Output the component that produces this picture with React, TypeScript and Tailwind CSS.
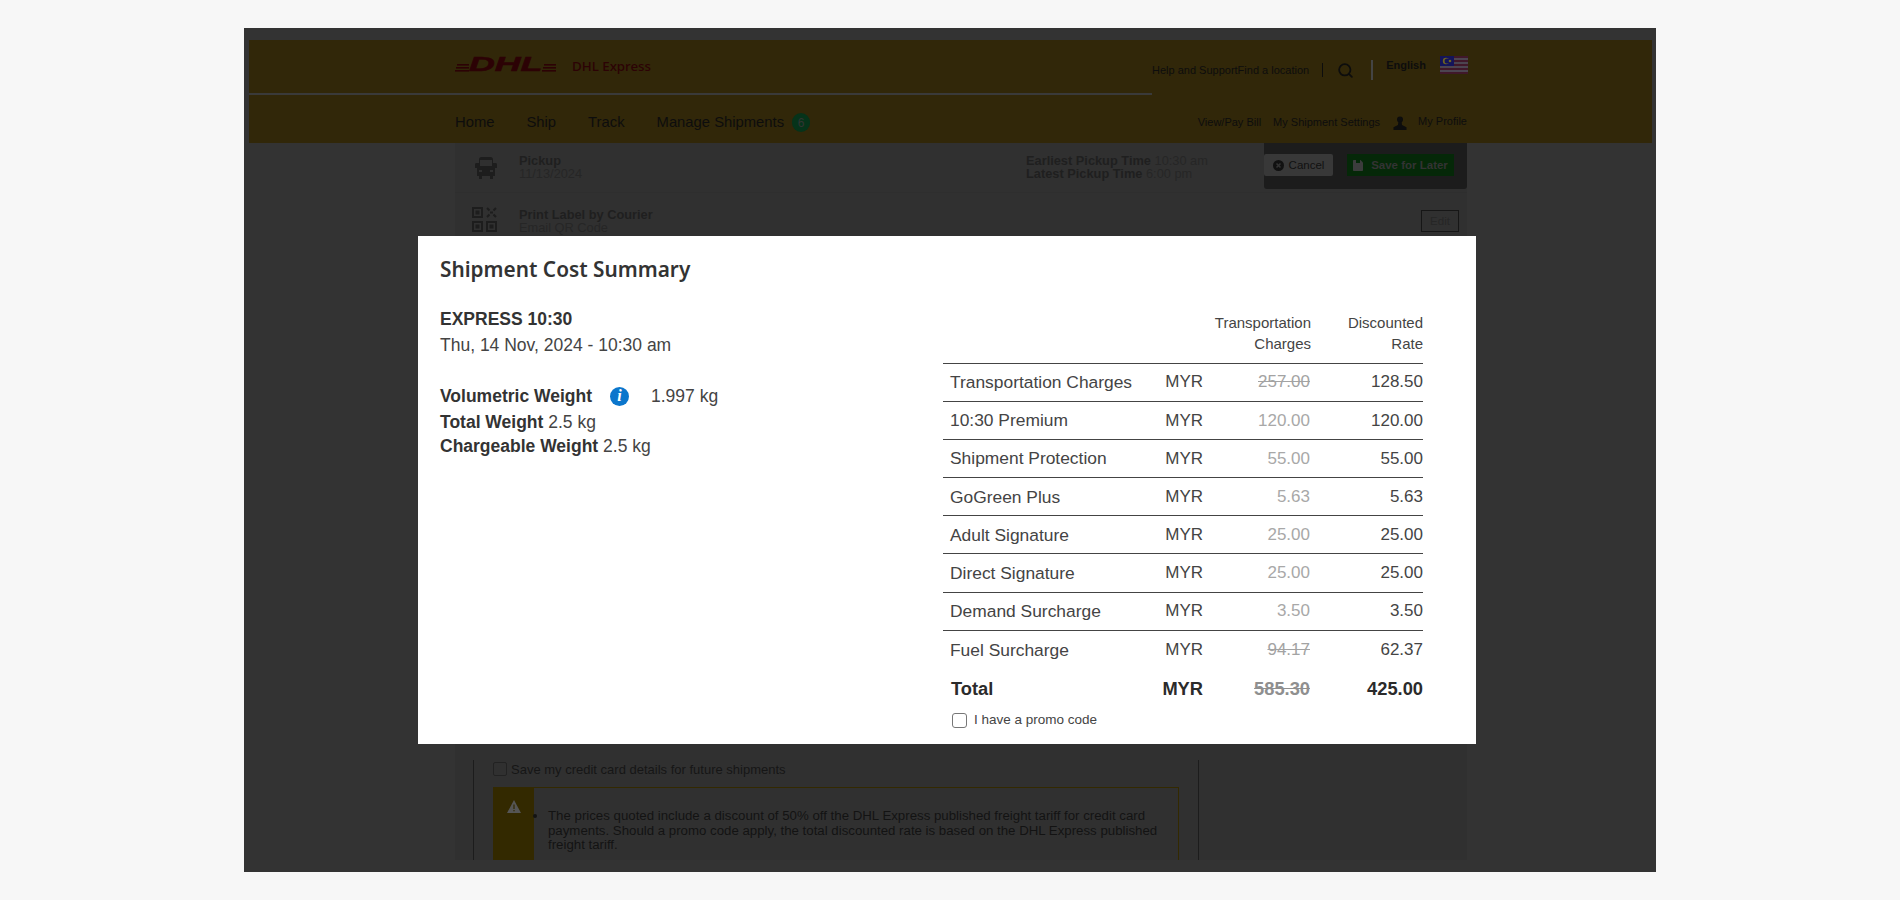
import { Search } from "lucide-react";

const rows = [
  { label: "Transportation Charges", was: "257.00", rate: "128.50", struck: true },
  { label: "10:30 Premium", was: "120.00", rate: "120.00" },
  { label: "Shipment Protection", was: "55.00", rate: "55.00" },
  { label: "GoGreen Plus", was: "5.63", rate: "5.63" },
  { label: "Adult Signature", was: "25.00", rate: "25.00" },
  { label: "Direct Signature", was: "25.00", rate: "25.00" },
  { label: "Demand Surcharge", was: "3.50", rate: "3.50" },
  { label: "Fuel Surcharge", was: "94.17", rate: "62.37", struck: true, last: true },
];

const Stripes = ({ width }: { width: number }) => (
  <svg width={width} height="8" viewBox={`0 0 ${width} 8`} className="shrink-0">
    <rect x="2" y="0" width={width - 2} height="1.6" fill="#2c0205" />
    <rect x="1" y="3" width={width - 1} height="1.6" fill="#2c0205" />
    <rect x="0" y="6" width={width} height="1.6" fill="#2c0205" />
  </svg>
);

const Flag = () => (
  <svg width="28" height="18" viewBox="0 0 28 18" className="shrink-0">
    {Array.from({ length: 9 }).map((_, i) => (
      <rect key={i} x="0" y={i * 2} width="28" height="2" fill={i % 2 === 0 ? "#40182a" : "#4c4450"} />
    ))}
    <rect x="0" y="0" width="14" height="10" fill="#14145a" />
    <circle cx="6" cy="5" r="3.2" fill="#6f6420" />
    <circle cx="7.2" cy="5" r="2.6" fill="#14145a" />
    <circle cx="10" cy="5" r="1.3" fill="#6f6420" />
  </svg>
);

const UserIcon = () => (
  <svg width="14" height="14" viewBox="0 0 14 14" className="shrink-0">
    <circle cx="7" cy="3.4" r="3" fill="#0d0d0d" />
    <path d="M5.4 5.5h3.2l.4 3.6 4.5 2.2V14H.5v-2.7L5 9.1z" fill="#0d0d0d" />
  </svg>
);

const TruckIcon = () => (
  <svg width="24" height="22" viewBox="0 0 24 22" className="shrink-0">
    <path d="M5 2.5C5 1 6 0 7.5 0h9C18 0 19 1 19 2.5V6h2.5c1 0 1.5.6 1.5 1.5V11h-2v8h-2v3h-3v-3H8v3H5v-3H3v-8H1V7.5C1 6.6 1.5 6 2.500 6H5z" fill="#1d1d1d" />
    <rect x="6" y="3" width="12" height="6" fill="#303030" />
    <rect x="5" y="13" width="3" height="2" fill="#303030" />
    <rect x="16" y="13" width="3" height="2" fill="#303030" />
  </svg>
);

const QrIcon = () => (
  <svg width="25" height="25" viewBox="0 0 25 25" className="mb-[3px] shrink-0" fill="none" stroke="#1d1d1d" strokeWidth="2">
    <rect x="1" y="1" width="9" height="9" />
    <rect x="4.500" y="4.500" width="2" height="2" fill="#1d1d1d" />
    <rect x="1" y="15" width="9" height="9" />
    <rect x="4.500" y="18.500" width="2" height="2" fill="#1d1d1d" />
    <rect x="15" y="15" width="9" height="9" />
    <rect x="18.500" y="18.500" width="2" height="2" fill="#1d1d1d" />
    <path d="M15 1l2.500 2.500M24 1l-2.500 2.500M15 10l2.500-2.500M24 10l-2.500-2.500M18 5.500h3" />
  </svg>
);

const CancelIcon = () => (
  <svg width="11" height="11" viewBox="0 0 11 11" className="shrink-0">
    <circle cx="5.500" cy="5.500" r="5.500" fill="#111" />
    <path d="M3.500 3.500l4 4M7.500 3.500l-4 4" stroke="#333" strokeWidth="1.600" />
  </svg>
);

const SaveIcon = () => (
  <svg width="10" height="11" viewBox="0 0 10 11" className="shrink-0">
    <path d="M0 1c0-.6.4-1 1-1h6.500L10 2.500V10c0 .6-.4 1-1 1H1c-.6 0-1-.4-1-1z" fill="#3c3c3c" />
    <rect x="3" y="0" width="4" height="3" fill="#052808" />
  </svg>
);

const WarnIcon = () => (
  <svg width="14" height="13" viewBox="0 0 14 13">
    <path d="M7 0l7 13H0z" fill="#555" />
    <rect x="6.400" y="4.500" width="1.200" height="4.500" fill="#332900" />
    <rect x="6.400" y="10" width="1.200" height="1.300" fill="#332900" />
  </svg>
);

export default function App() {
  return (
    <div className="h-[900px] overflow-hidden bg-[#f7f7f7] pt-[28px] pl-[244px] font-['Liberation_Sans',Arial,sans-serif]">
      <div className="relative flex h-[844px] w-[1412px] flex-col bg-[#333] pt-[12px] pr-[4px] pb-[12px] pl-[5px]">
        {/* header */}
        <header className="h-[103px] shrink-0 bg-[#312709] text-[#0d0d0d]">
          <div className="flex h-[55px]">
            <div className="flex w-[903px] items-center border-b-[2px] border-[#3a3a3a] pb-[3px] pl-[206px]">
              <div className="flex h-[16px] w-[101px] items-end pb-[1px]">
                <Stripes width={14} />
                <span className="inline-block w-[73px] origin-left scale-x-[1.7] text-[21px] leading-[16px] font-bold italic text-[#2c0205] [-webkit-text-stroke:0.6px_#2c0205]">
                  DHL
                </span>
                <Stripes width={14} />
              </div>
              <span className="mt-[3px] ml-[16px] font-['Noto_Sans',sans-serif] text-[13.300px] font-medium text-[#2c0205]">
                DHL Express
              </span>
            </div>
            <div className="flex h-[54px] items-center pt-[6px] text-[11px]">
              <span className="whitespace-nowrap">Help and SupportFind a location</span>
              <span className="ml-[13px] h-[14px] w-[1px] bg-[#0d0d0d]" />
              <Search className="ml-[14px] h-[17px] w-[17px] text-[#0d0d0d]" strokeWidth={2.500} />
              <span className="ml-[17px] h-[20px] w-[2px] bg-[#444]" />
              <div className="mb-[10px] ml-[13px] flex items-center gap-[14px]">
                <span className="font-bold">English</span>
                <Flag />
              </div>
            </div>
          </div>
          <div className="flex h-[48px] items-center justify-between pt-[7px] pr-[185px] pl-[206px]">
            <nav className="flex items-center gap-[32px] text-[14.800px]">
              <span>Home</span>
              <span>Ship</span>
              <span>Track</span>
              <span className="flex items-center gap-[8px]">
                Manage Shipments
                <span className="flex h-[19px] w-[18px] items-center justify-center rounded-full bg-[#06331a] text-[12px] text-[#333]">
                  6
                </span>
              </span>
            </nav>
            <div className="flex items-center text-[11px]">
              <span>View/Pay Bill</span>
              <span className="ml-[12px]">My Shipment Settings</span>
              <span className="ml-[13px]">
                <UserIcon />
              </span>
              <span className="mb-[3px] ml-[11px]">My Profile</span>
            </div>
          </div>
        </header>

        {/* page behind the dialog */}
        <main className="ml-[206px] flex min-h-0 w-[1012px] flex-1 flex-col bg-[#303030] text-[12.800px] leading-[13px] text-[#262626]">
          <div className="flex h-[50px] shrink-0 border-b border-[#2e2e2e]">
            <div className="flex w-[571px] items-center gap-[21px] pl-[19px]">
              <TruckIcon />
              <div className="pb-[2px]">
                <div className="font-bold text-[#1f1f1f]">Pickup</div>
                <div>11/13/2024</div>
              </div>
            </div>
            <div className="w-[238px] pt-[11px]">
              <div>
                <b className="text-[#1f1f1f]">Earliest Pickup Time</b> 10:30 am
              </div>
              <div>
                <b className="text-[#1f1f1f]">Latest Pickup Time</b> 6:00 pm
              </div>
            </div>
            <div className="flex h-[46px] w-[203px] gap-[14px] rounded-b-[3px] bg-[#1c1c1c] pt-[11px] text-[11.500px]">
              <span className="flex h-[22px] w-[69px] items-center justify-center gap-[5px] rounded-[2px] bg-[#383838] text-[#111]">
                <CancelIcon />
                Cancel
              </span>
              <span className="flex h-[22px] w-[107px] items-center justify-center gap-[8px] bg-[#052808] font-bold text-[#333]">
                <SaveIcon />
                Save for Later
              </span>
            </div>
          </div>
          <div className="flex h-[56px] shrink-0 items-center justify-between pr-[8px] pl-[17px]">
            <div className="flex items-center gap-[22px]">
              <QrIcon />
              <div>
                <div className="font-bold text-[#1f1f1f]">Print Label by Courier</div>
                <div>Email QR Code</div>
              </div>
            </div>
            <span className="flex h-[22px] w-[38px] items-center justify-center border border-[#161616] text-[11.500px]">
              Edit
            </span>
          </div>

          <div className="mt-auto ml-[18px] h-[100px] w-[726px] border-x border-[#1c1c1c] pr-[19px] pl-[19px] text-[13px] text-[#111]">
            <label className="flex h-[18px] items-center gap-[4px]">
              <span className="h-[14px] w-[14px] rounded-[2px] border border-[#222]" />
              <span className="text-[#161616]">Save my credit card details for future shipments</span>
            </label>
            <div className="mt-[9px] flex h-[73px] border-x border-t border-[#332900]">
              <div className="flex h-full w-[40px] shrink-0 justify-center bg-[#332900] pt-[12px]">
                <WarnIcon />
              </div>
              <ul className="mt-[21px] w-[625px] list-disc pl-[14px] text-[13.250px] leading-[14.700px] text-[#131313]">
                <li>
                  The prices quoted include a discount of 50% off the DHL Express published freight tariff for credit card payments. Should a promo code apply, the total discounted rate is based on the DHL Express published freight tariff.
                </li>
              </ul>
            </div>
          </div>
        </main>

        {/* dialog */}
        <div className="absolute top-[208px] left-[174px] flex h-[508px] w-[1058px] bg-white text-[#444]">
          <div className="w-[525px] shrink-0 pt-[19px] pl-[22px]">
            <h2 className="font-['Noto_Sans',sans-serif] text-[20.800px] leading-[28px] font-semibold text-[#333]">
              Shipment Cost Summary
            </h2>
            <div className="mt-[25px] text-[17.500px] leading-[22px] font-bold text-[#333]">EXPRESS 10:30</div>
            <div className="mt-[4px] text-[17.500px] leading-[22px]">Thu, 14 Nov, 2024 - 10:30 am</div>
            <div className="mt-[28px] flex h-[24px] items-center text-[17.500px]">
              <b className="text-[#333]">Volumetric Weight</b>
              <span className="ml-[18px] flex h-[19px] w-[19px] items-center justify-center rounded-full bg-[#0b76cc] font-['Liberation_Serif',serif] text-[16px] font-bold text-white italic">
                i
              </span>
              <span className="ml-[22px]">1.997 kg</span>
            </div>
            <div className="mt-[2px] text-[17.500px] leading-[24px]">
              <b className="text-[#333]">Total Weight</b> 2.5 kg
            </div>
            <div className="text-[17.500px] leading-[24px]">
              <b className="text-[#333]">Chargeable Weight</b> 2.5 kg
            </div>
          </div>

          <div className="w-[480px] shrink-0 pt-[76px]">
            <table className="w-[480px] table-fixed border-collapse">
              <colgroup>
                <col className="w-[207px]" />
                <col className="w-[53px]" />
                <col className="w-[108px]" />
                <col className="w-[112px]" />
              </colgroup>
              <thead>
                <tr className="h-[51px] border-b border-[#444] align-top text-[15px] leading-[21px]">
                  <th />
                  <th />
                  <th className="text-right font-normal">
                    Transportation
                    <br />
                    Charges
                  </th>
                  <th className="text-right font-normal">
                    Discounted
                    <br />
                    Rate
                  </th>
                </tr>
              </thead>
              <tbody>
                {rows.map((row) => (
                  <tr key={row.label} className={row.last ? "h-[38px]" : "h-[38.200px] border-b border-[#444]"}>
                    <td className="pl-[7px] text-[17.400px]">{row.label}</td>
                    <td className="text-right text-[17px]">MYR</td>
                    <td className={row.struck ? "pr-[1px] text-right text-[17px] text-[#a3a3a3] line-through" : "pr-[1px] text-right text-[17px] text-[#a8a8a8]"}>
                      {row.was}
                    </td>
                    <td className="text-right text-[17px]">{row.rate}</td>
                  </tr>
                ))}
                <tr className="h-[40px] text-[18.300px] font-bold text-[#2b2b2b]">
                  <td className="pl-[8px]">Total</td>
                  <td className="text-right">MYR</td>
                  <td className="pr-[1px] text-right text-[#8f8f8f] line-through">585.30</td>
                  <td className="text-right">425.00</td>
                </tr>
              </tbody>
            </table>
            <label className="mt-[2px] flex items-center gap-[7px] pl-[9px] text-[13.500px] text-[#444]">
              <input type="checkbox" className="h-[15px] w-[15px] appearance-none rounded-[3px] border border-[#777] bg-white" />
              I have a promo code
            </label>
          </div>
        </div>
      </div>
    </div>
  );
}
